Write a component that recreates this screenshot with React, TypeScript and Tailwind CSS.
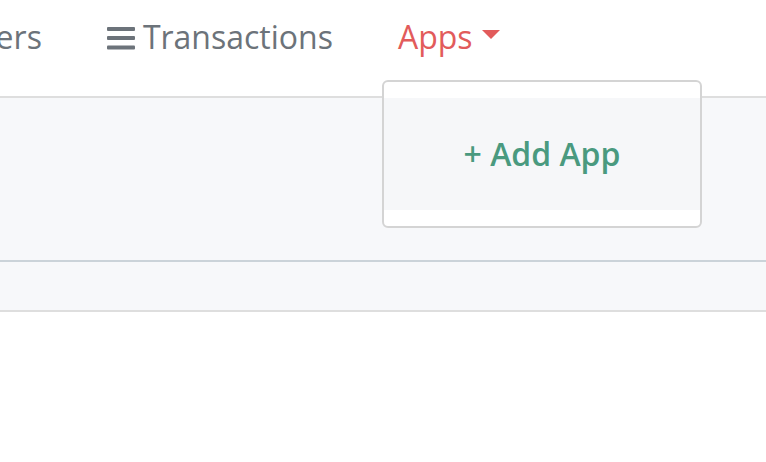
import React from "react";

export default function App() {
  return (
    <div className="relative w-[766px] h-[462px] overflow-hidden bg-white" style={{ fontFamily: '"Open Sans", "Noto Sans", sans-serif' }}>
      <nav className="h-[96px] flex items-start overflow-hidden">
        <div className="flex items-center pt-[15px] -ml-[43px] text-[32px] leading-[44px] text-[#6c737a]">
          <span>Users</span>
          <span className="ml-[65px] flex items-center">
            <svg width="28" height="24" viewBox="0 0 28 24" className="mr-[8px] mt-[2px]">
              <rect x="0" y="1" width="28" height="4" rx="1" fill="#6c737a" />
              <rect x="0" y="10" width="28" height="4" rx="1" fill="#6c737a" />
              <rect x="0" y="19.5" width="28" height="4" rx="1" fill="#6c737a" />
            </svg>
            Transactions
          </span>
          <span className="ml-[65px] flex items-center text-[#e25b5b]">
            Apps
            <svg width="18" height="10" viewBox="0 0 18 10" className="ml-[9px] -mt-[4px]">
              <path d="M0 0 L18 0 L9 9 Z" fill="#e25b5b" />
            </svg>
          </span>
        </div>
      </nav>
      <div className="border-t-2 border-[#dedede] bg-[#f7f8fa] h-[164px]" />
      <div className="border-t-2 border-[#cbd3d9] bg-[#f7f8fa] h-[52px] border-b-2 border-b-[#dedede]" />
      <div className="absolute left-[382px] top-[80px] w-[320px] h-[148px] rounded-[6px] border-2 border-[#d4d4d4] bg-white py-[16px] flex">
        <div className="flex-1 bg-[#f6f7f9] flex items-center justify-center text-[32px] font-semibold text-[#4a9a7f]">
          + Add App
        </div>
      </div>
    </div>
  );
}
